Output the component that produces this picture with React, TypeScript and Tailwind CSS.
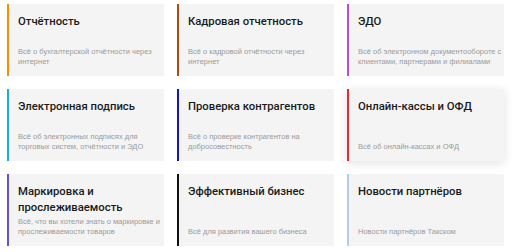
const cards = [
  { title: "Отчётность", text: "Всё о бухгалтерской отчётности через интернет", border: "border-[#ff8c00]" },
  { title: "Кадровая отчетность", text: "Всё о кадровой отчётности через интернет", border: "border-[#b5480c]" },
  { title: "ЭДО", text: "Всё об электронном документообороте с клиентами, партнерами и филиалами", border: "border-[#bb4ae0]" },
  { title: "Электронная подпись", text: "Всё об электронных подписях для торговых систем, отчётности и ЭДО", border: "border-[#10b0ea]" },
  { title: "Проверка контрагентов", text: "Всё о проверке контрагентов на добросовестность", border: "border-[#1414c8]" },
  { title: "Онлайн-кассы и ОФД", text: "Всё об онлайн-кассах и ОФД", border: "border-[#f2222e]", hover: true },
  { title: "Маркировка и прослеживаемость", text: "Всё, что вы хотели знать о маркировке и прослеживаемости товаров", border: "border-[#6b4de6]" },
  { title: "Эффективный бизнес", text: "Всё для развития вашего бизнеса", border: "border-[#111111]" },
  { title: "Новости партнёров", text: "Новости партнёров Такском", border: "border-[#b9cde0]" },
];

export default function App() {
  return (
    <div className="w-[512px] h-[252px] bg-white pl-[7px] pt-[4px] font-['Roboto',Arial,sans-serif]">
      <div className="grid grid-cols-[157px_157px_157px] auto-rows-[72px] gap-x-[13px] gap-y-[13px]">
        {cards.map((c) => (
          <div
            key={c.title}
            className={`flex flex-col justify-between border-l-2 ${c.border} bg-[#f4f4f4] pl-[9px] pr-0 pt-[10px] pb-[10px] ${c.hover ? "shadow-[0_2px_10px_rgba(0,0,0,0.12)]" : ""}`}
          >
            <div className="text-[11.3px] leading-[16px] font-medium text-[#1a1a1a]">{c.title}</div>
            <div className="font-['Liberation_Sans',Arial,sans-serif] text-[7.5px] leading-[9.5px] text-[#9a9a9a]">{c.text}</div>
          </div>
        ))}
      </div>
    </div>
  );
}
